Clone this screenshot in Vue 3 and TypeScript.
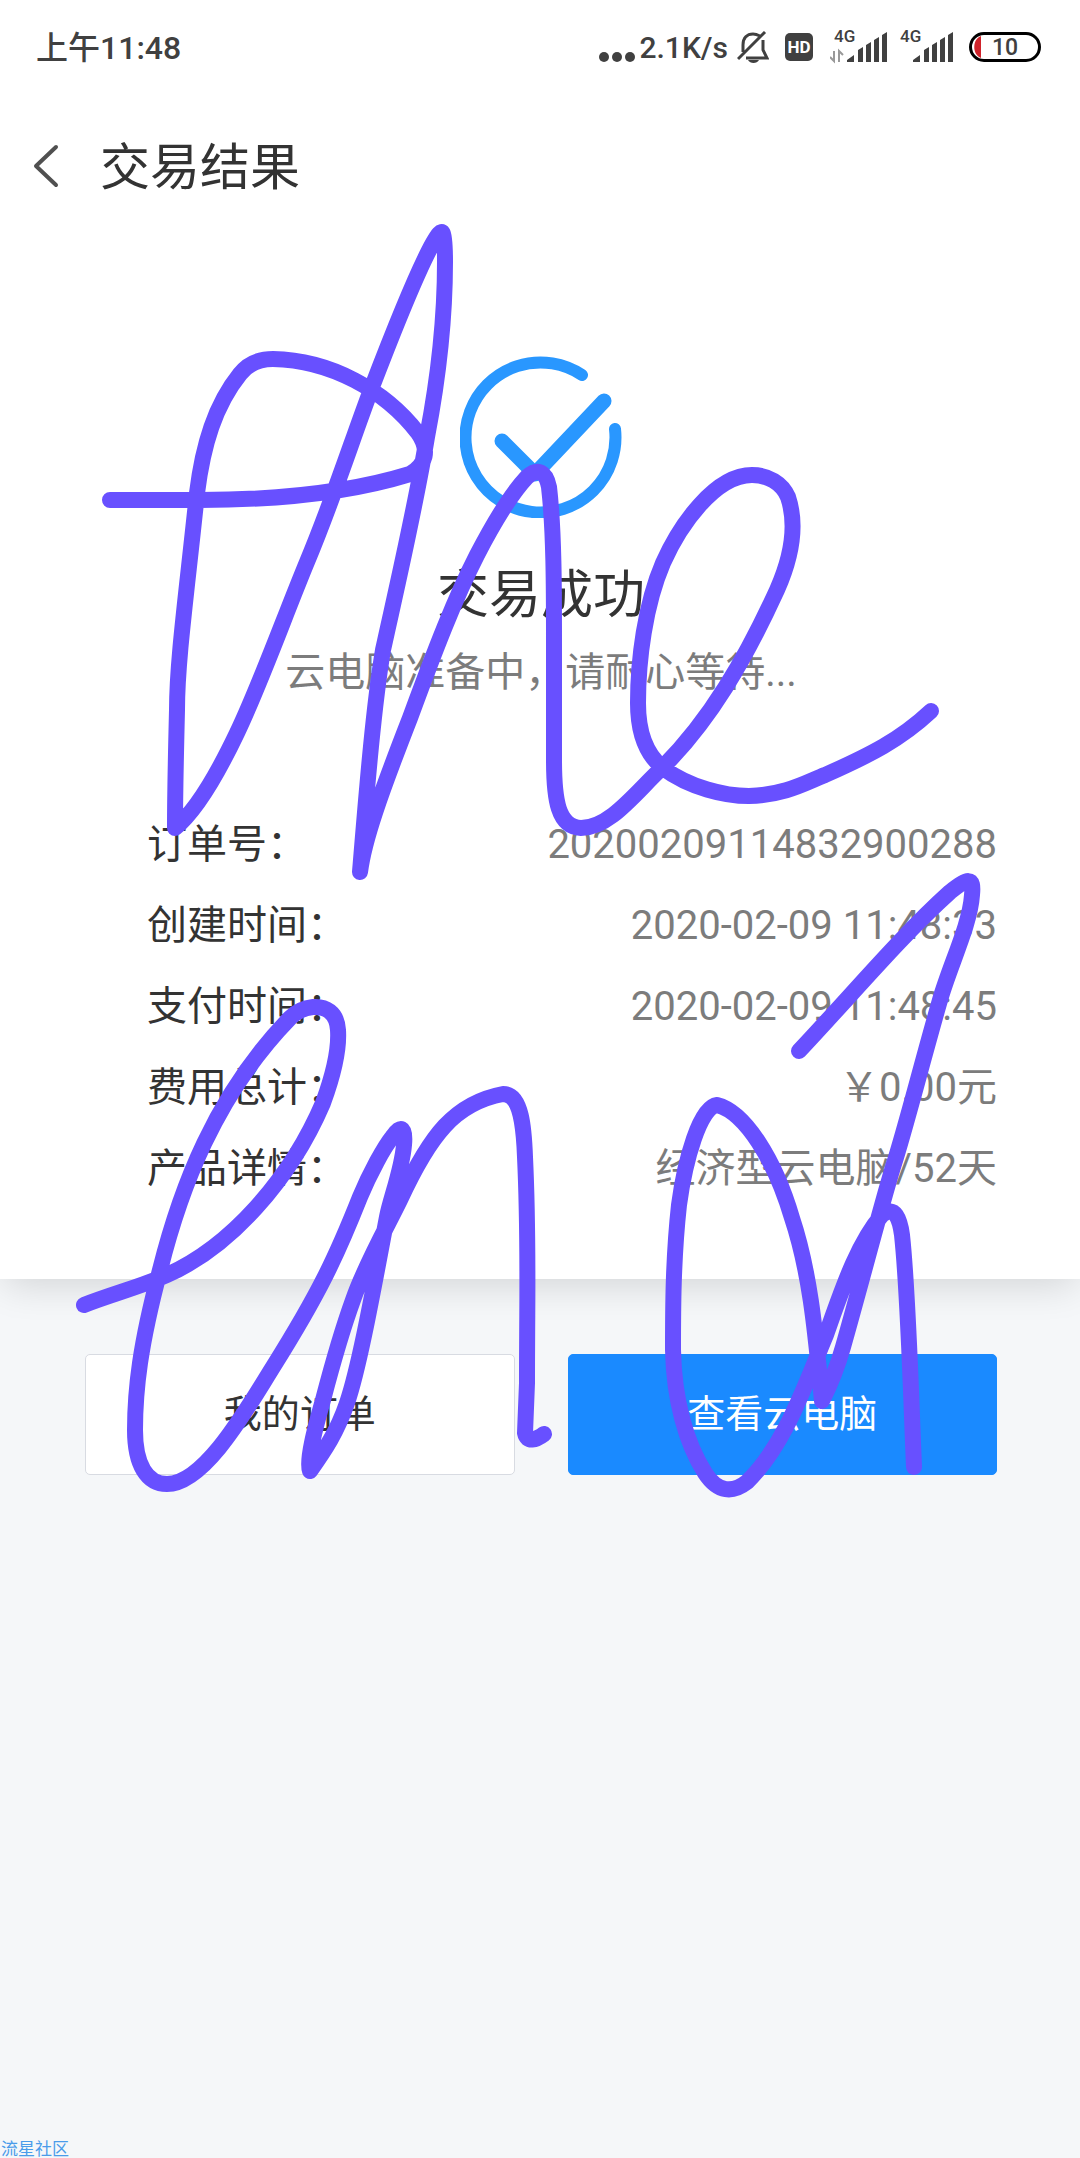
<script setup lang="ts">
interface Row {
  label: string
  value: string
}

const rows: Row[] = [
  { label: '订单号：', value: '20200209114832900288' },
  { label: '创建时间：', value: '2020-02-09 11:48:33' },
  { label: '支付时间：', value: '2020-02-09 11:48:45' },
  { label: '费用总计：', value: '￥0.00元' },
  { label: '产品详情：', value: '经济型云电脑/52天' },
]
</script>

<template>
  <div class="screen">
    <div class="status">
      <span class="time">上午11:48</span>
      <div class="indicators">
        <svg class="dots" width="36" height="32" viewBox="0 0 36 32">
          <circle cx="5" cy="26" r="5" /><circle cx="18" cy="26" r="5" /><circle cx="31" cy="26" r="5" />
        </svg>
        <span class="speed">2.1K/s</span>
        <svg class="bell" width="32" height="32" viewBox="0 0 32 32" fill="none" stroke="#404040" stroke-width="3">
          <path d="M1 28 28 1M6 21V14C6 7 10 3 16 3c3 0 5 1 7 2M26 9v10l4 8H9" />
          <path d="M11 29h11c-2 4-9 4-11 0z" fill="#404040" stroke="none" />
        </svg>
        <svg class="hd" width="28" height="28" viewBox="0 0 28 28">
          <rect width="28" height="28" rx="5" fill="#404040" />
          <text x="14" y="20" text-anchor="middle" font-size="17" font-weight="700" fill="#fff">HD</text>
        </svg>
        <svg class="signal" width="57" height="44" viewBox="0 -6 57 44">
          <text x="4" y="11" font-size="17" font-weight="500">4G</text>
          <path d="M17 31v-2l7-5v7zM28 31V19l5-3v15zM36 31V14l5-3v20zM44 31V9l5-3v25zM52 31V4l5-3v30z" />
          <path d="M4 20v10L0 26M9 31V20l4 4" fill="none" stroke="#999" stroke-width="2" />
        </svg>
        <svg class="signal second" width="53" height="44" viewBox="4 -6 53 44">
          <text x="4" y="11" font-size="17" font-weight="500">4G</text>
          <path d="M17 31v-2l7-5v7zM28 31V19l5-3v15zM36 31V14l5-3v20zM44 31V9l5-3v25zM52 31V4l5-3v30z" />
        </svg>
        <svg class="battery" width="72" height="30" viewBox="0 0 72 30">
          <path d="M12 4C3 7 3 23 12 26z" fill="#d0232b" />
          <rect x="1.500" y="1.500" width="69" height="27" rx="13.500" fill="none" stroke="#000" stroke-width="3" />
          <text x="36" y="23" text-anchor="middle" font-size="23" font-weight="500">10</text>
        </svg>
      </div>
    </div>

    <header class="bar">
      <button class="back" type="button" aria-label="返回">
        <svg width="28" height="44" viewBox="0 0 28 44" fill="none" stroke="#505050" stroke-width="4" stroke-linecap="round" stroke-linejoin="round">
          <path d="M24 3 4 22 24 41" />
        </svg>
      </button>
      <h1>交易结果</h1>
    </header>

    <main>
      <section class="result">
        <svg class="tick" width="162" height="162" viewBox="0 0 162 162" fill="none" stroke="#2997ff" stroke-linecap="round">
          <path d="M122 19A75 75 0 1 0 155 73" stroke-width="12" />
          <path d="M42 85 75 118 144 45" stroke-width="15" stroke-linejoin="round" />
        </svg>
        <h2>交易成功</h2>
        <p>云电脑准备中，请耐心等待...</p>
        <dl>
          <div v-for="row in rows" :key="row.label" class="row">
            <dt>{{ row.label }}</dt>
            <dd>{{ row.value }}</dd>
          </div>
        </dl>
      </section>
      <div class="actions">
        <button class="action" type="button">我的订单</button>
        <button class="action primary" type="button">查看云电脑</button>
      </div>
    </main>

    <footer>流星社区</footer>

    <!-- Pen strokes drawn over the page -->
    <svg class="ink" viewBox="0 0 1080 2158" aria-hidden="true">
      <path
        d="M110 500H200C290 500 355 491 410 474C426 465 430 450 418 433C385 390 330 360 273 359
           C257 359 247 365 240 374C215 405 203 445 197 493C187 590 177 660 177 710C176 750 175 800 175 828
           C195 812 217 775 237 733C260 685 285 615 307 562C333 500 352 440 372 387C390 340 415 275 433 243
           C443 225 445 228 445 262C445 330 437 385 427 437C415 510 395 595 383 650C373 710 366 800 360 872
           C364 840 380 795 410 718C435 650 455 598 477 555C490 530 510 495 527 477C538 467 546 472 549 487
           C554 530 554 590 554 640V760C554 800 558 827 581 828C610 828 635 793 663 767
           C710 720 745 660 777 590C797 545 794 515 788 497C782 483 768 475 752 475C715 475 680 525 663 563
           C645 605 638 660 638 703C638 735 648 756 663 768C690 788 725 796 749 796C785 795 805 783 825 775
           C870 755 900 740 931 711"
      />
      <path
        d="M84 1305C115 1293 140 1287 167 1275C230 1247 290 1180 323 1103C337 1065 339 1045 338 1030
           C337 1012 325 1006 313 1007C303 1008 296 1012 290 1018C215 1095 180 1190 160 1270
           C140 1345 135 1390 135 1430C135 1465 147 1484 167 1484C205 1484 248 1407 273 1367
           C320 1292 337 1255 360 1197C370 1173 384 1147 393 1136C400 1126 406 1125 404 1145
           C402 1170 390 1200 387 1217C375 1280 360 1365 347 1403C337 1432 325 1450 310 1471
           C306 1460 316 1425 323 1400C334 1358 345 1322 353 1300C365 1265 388 1225 400 1200
           C430 1135 455 1103 503 1094C522 1094 524 1130 525 1157C529 1240 527 1290 527 1383
           L525 1433C527 1443 536 1440 544 1434"
      />
      <path
        d="M799 1051C850 997 900 937 950 892C968 878 974 876 972 895C970 925 950 965 940 1000
           C920 1070 905 1130 893 1167C880 1210 862 1280 843 1347C838 1365 830 1385 822 1401
           C816 1340 811 1275 792 1218C775 1160 745 1112 717 1105C700 1107 685 1160 679 1205
           C673 1260 673 1310 673 1350C674 1400 686 1443 705 1473C718 1493 733 1493 747 1482
           C785 1445 805 1385 826 1335C845 1280 860 1240 882 1215C895 1204 900 1220 902 1235
           C908 1290 910 1370 914 1467"
      />
    </svg>
  </div>
</template>

<style>
body {
  margin: 0;
  background: #f5f7f9;
}
</style>

<style scoped>
.screen {
  position: relative;
  display: flex;
  flex-direction: column;
  min-height: 100vh;
  color: #333;
  font-family: Roboto, "Noto Sans CJK SC", sans-serif;
}

.status {
  display: flex;
  justify-content: space-between;
  align-items: center;
  height: 94px;
  padding: 0 39px 0 36px;
  background: #fff;
  color: #404040;
  font-weight: 500;
}

.time {
  padding-bottom: 4px;
  font-size: 32px;
}

.indicators {
  display: flex;
  align-items: center;
}

.indicators svg {
  flex: none;
  fill: #404040;
}

.indicators .bell {
  fill: none;
}

.speed {
  margin: 0 9px 0 4px;
  font-size: 30px;
}

.hd {
  margin: 0 17px 0 16px;
}

.second {
  margin: 0 16px 0 13px;
}

.bar {
  display: flex;
  align-items: center;
  height: 144px;
  padding: 0 32px;
  background: #fff;
}

.back {
  display: flex;
  width: 68px;
  padding: 0;
  border: 0;
  background: none;
}

h1,
h2 {
  margin: 0;
  font-weight: 400;
}

h1 {
  padding-top: 4px;
  font-size: 50px;
  line-height: 72px;
}

.result {
  display: flex;
  flex-direction: column;
  align-items: center;
  padding: 118px 83px 70px 85px;
  background: #fff;
  box-shadow: 0 10px 36px -4px rgba(0, 0, 0, 0.14);
}

.bar,
.status {
  position: relative;
  z-index: 1;
}

h2 {
  margin-top: 40px;
  font-size: 52px;
  line-height: 76px;
}

p {
  margin: 9px 0 0;
  color: #7c7c7c;
  font-size: 40px;
  line-height: 60px;
}

dl {
  align-self: stretch;
  margin: 101px 0 0 62px;
}

.row {
  display: flex;
  justify-content: space-between;
  font-size: 40px;
  line-height: 81px;
}

dd {
  margin: 0;
  color: #7c7c7c;
}

.actions {
  display: flex;
  gap: 53px;
  padding: 75px 83px 75px 85px;
}

.action {
  flex: 1;
  height: 121px;
  padding: 0 0 8px;
  border: 1px solid #d8dbe2;
  border-radius: 5px;
  background: #fff;
  color: #333;
  font: inherit;
  font-size: 38px;
}

.primary {
  border-color: #1a8aff;
  background: #1a8aff;
  color: #fff;
}

footer {
  margin-top: auto;
  padding-left: 1px;
  color: #4a9cea;
  font-size: 17px;
  line-height: 18px;
}

.ink {
  position: absolute;
  z-index: 2;
  top: 0;
  left: 0;
  width: 100%;
  fill: none;
  stroke: #6850ff;
  stroke-width: 16;
  stroke-linecap: round;
  stroke-linejoin: round;
  pointer-events: none;
}
</style>
